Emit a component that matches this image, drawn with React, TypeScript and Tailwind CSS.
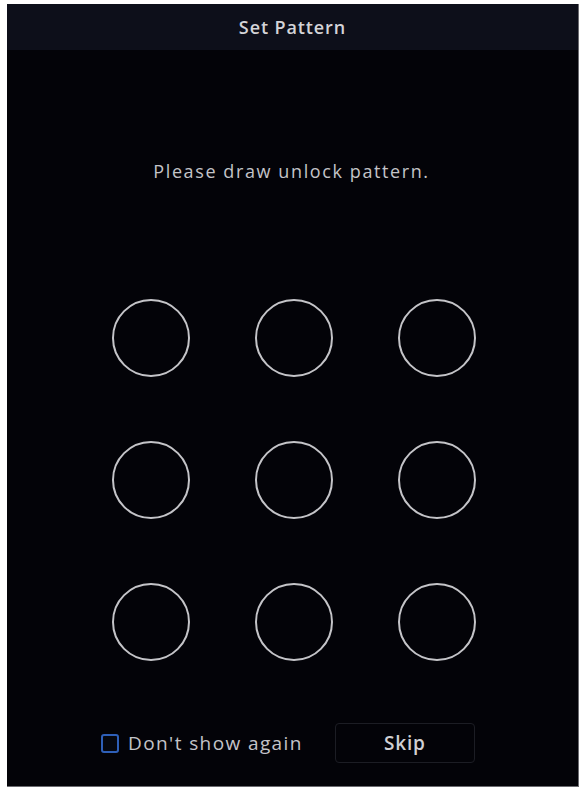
const dots = [0, 1, 2, 3, 4, 5, 6, 7, 8];

export default function App() {
  return (
    <div className="w-[581px] h-[789px] bg-white pl-[7px] pt-[4px] pr-[2px] pb-[2px]">
      <div
        className="flex h-full flex-col bg-[#030308] border-r border-b border-[#6b6b70]"
        style={{ fontFamily: '"Open Sans", "DejaVu Sans", sans-serif' }}
      >
        <div className="flex h-[46px] shrink-0 items-center justify-center bg-[#0d0f1a]">
          <span className="text-[18px] font-semibold tracking-[0.9px] text-[#d4d4d8]">Set Pattern</span>
        </div>

        <div className="mt-[109px] shrink-0 text-center text-[18px] leading-[24px] font-medium tracking-[1.6px] text-[#c4c4c8] pr-[2px]">
          Please draw unlock pattern.
        </div>

        <div className="mt-[116px] grid shrink-0 grid-cols-3 gap-x-[65px] gap-y-[64px] self-start ml-[105px]">
          {dots.map((d) => (
            <div
              key={d}
              className="h-[78px] w-[78px] rounded-full border-2 border-[#c4c4c8]"
            />
          ))}
        </div>

        <div className="mt-[62px] flex shrink-0 items-center ml-[94px]">
          <div className="h-[19px] w-[18px] rounded-[3px] border-2 border-[#2e5fb8] bg-[#05070f]" />
          <span className="ml-[9px] text-[19px] font-medium tracking-[1.4px] text-[#c4c4c8]">Don't show again</span>
          <div className="ml-[32px] flex h-[40px] w-[140px] items-center justify-center rounded-[4px] border border-[#1c1d24]">
            <span className="text-[19px] font-semibold tracking-[0.8px] text-[#d0d0d4]">Skip</span>
          </div>
        </div>
      </div>
    </div>
  );
}
